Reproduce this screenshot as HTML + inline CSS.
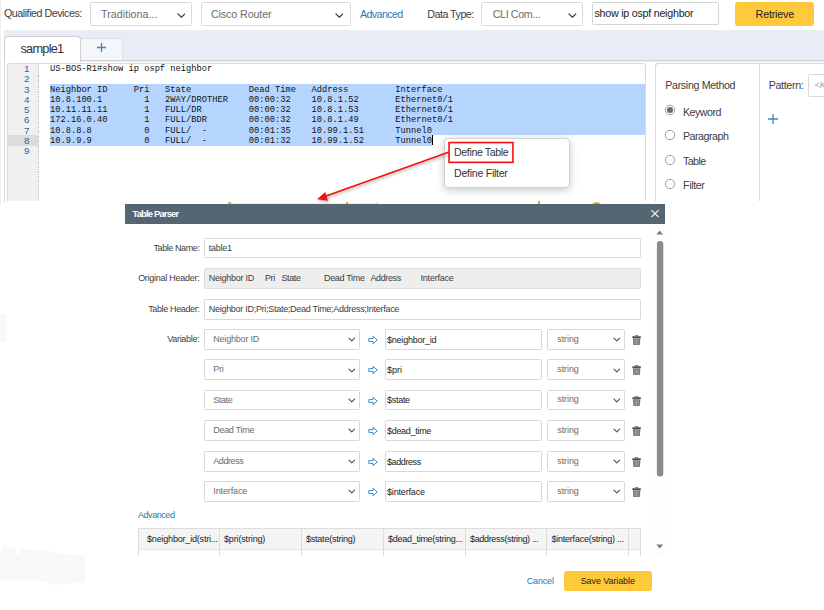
<!DOCTYPE html>
<html><head><meta charset="utf-8"><title>Table Parser</title>
<style>
html,body{margin:0;padding:0;}
body{width:824px;height:610px;overflow:hidden;background:#fff;position:relative;font-family:"Liberation Sans",sans-serif;color:#404040;}
.abs{position:absolute;}
.t{position:absolute;white-space:pre;transform:translateY(-50%);line-height:1;}
.f11{font-size:10.7px;}
.f9{font-size:9px;}
.gray{color:#6c6c6c;}
.blue{color:#2a7ab2;}
.box{position:absolute;box-sizing:border-box;border:1px solid #d9d9d9;background:#fff;border-radius:1.5px;}
.mono{font-family:"Liberation Mono",monospace;font-size:8.72px;line-height:10.25px;white-space:pre;color:#111;}
</style></head><body>

<div class="abs" style="left:0;top:0;width:1px;height:205px;background:#f0f0f0"></div>
<div class="abs" style="left:0;top:314px;width:6px;height:28px;background:#f8f8f8"></div>
<svg class="abs" style="left:0;top:540px" width="90" height="50" viewBox="0 540 90 50"><polygon points="0,553.3 1.6,553.3 1.6,547.4 15,547.4 15,553.7 20,553.7 20,549.2 45.7,549.7 55.2,553.7 84.9,555.2 84.9,582.8 67,582.8 67,584.4 52,584.4 42.6,580.8 0,580.8" fill="#f8f8f8"/></svg>
<span id="t1" class="t f11" style="left:4px;top:13.2px;letter-spacing:-0.465px;">Qualified Devices:</span>
<div class="box" style="left:90px;top:2px;width:101.5px;height:23.5px"></div>
<span id="t2" class="t f11 gray" style="left:101px;top:14.2px;letter-spacing:0.036px;">Traditiona...</span>
<svg class="abs" style="left:176.6px;top:12.8px" width="8.8" height="5.3" viewBox="-1 -1 8.8 5.3"><path d="M0 0 L3.4 3.3 L6.8 0" fill="none" stroke="#4a4a4a" stroke-width="1.2" stroke-linecap="round" stroke-linejoin="round"/></svg>
<div class="box" style="left:201px;top:2px;width:149.5px;height:23.5px"></div>
<span id="t3" class="t f11 gray" style="left:211px;top:14.2px;letter-spacing:-0.111px;">Cisco Router</span>
<svg class="abs" style="left:334.6px;top:12.8px" width="8.8" height="5.3" viewBox="-1 -1 8.8 5.3"><path d="M0 0 L3.4 3.3 L6.8 0" fill="none" stroke="#4a4a4a" stroke-width="1.2" stroke-linecap="round" stroke-linejoin="round"/></svg>
<span id="t4" class="t f11 blue" style="left:360px;top:13.7px;letter-spacing:-0.606px;">Advanced</span>
<span id="t5" class="t f11" style="left:427.25px;top:13.7px;letter-spacing:-0.5px;">Data Type:</span>
<div class="box" style="left:481px;top:2px;width:101.5px;height:23.5px"></div>
<span id="t6" class="t f11 gray" style="left:492.75px;top:14.2px;letter-spacing:-0.377px;">CLI Com...</span>
<svg class="abs" style="left:567.9px;top:12.8px" width="8.8" height="5.3" viewBox="-1 -1 8.8 5.3"><path d="M0 0 L3.4 3.3 L6.8 0" fill="none" stroke="#4a4a4a" stroke-width="1.2" stroke-linecap="round" stroke-linejoin="round"/></svg>
<div class="box" style="left:592px;top:2px;width:127px;height:22.5px;border-color:#d4d4d4"></div>
<span id="t7" class="t f11" style="left:594.5px;top:12.6px;letter-spacing:-0.243px;color:#222">show ip ospf neighbor</span>
<div class="abs" style="left:735px;top:2px;width:78.5px;height:23.6px;background:#ffc93c;border-radius:3px"></div>
<span id="t8" class="t f11" style="left:755.6px;top:13.8px;letter-spacing:-0.186px;color:#222">Retrieve</span>
<div class="abs" style="left:4px;top:30px;width:820px;height:30px;background:#e8ecf4"></div>
<div class="abs" style="left:4px;top:60px;width:820px;height:2px;background:linear-gradient(to bottom,#d2d4d8 0,#d2d4d8 50%,#e9eaec 50%,#e9eaec 100%)"></div>
<div class="abs" style="left:80px;top:38.3px;width:42.5px;height:21.3px;background:#f4f6f9;border:1px solid #dde0e6;border-bottom:none;border-radius:3px 3px 0 0;box-sizing:border-box"></div>
<svg class="abs" style="left:96px;top:42px" width="11" height="11" viewBox="0 0 11 11"><path d="M5.5 1 V10 M1 5.5 H10" stroke="#3a8bc0" stroke-width="1.3" fill="none"/></svg>
<div class="abs" style="left:4.3px;top:36.3px;width:76.8px;height:25.5px;background:#fff;border:1px solid #cfcfcf;border-bottom:none;border-radius:4px 4px 0 0;box-sizing:border-box"></div>
<span id="t9" class="t " style="left:20.5px;top:48.6px;letter-spacing:-0.788px;font-size:12.8px;color:#333">sample1</span>
<div class="abs" style="left:4.3px;top:61px;width:1px;height:140.5px;background:#dedede"></div>
<div class="abs" style="left:7px;top:63px;width:639px;height:138.4px;border:1px solid #dbdbdb;border-bottom:none;border-radius:3px 3px 0 0;box-sizing:border-box;background:#fff"></div>
<div class="abs" style="left:8px;top:64px;width:30.3px;height:137.4px;background:#f0f0f0"></div>
<div class="abs" style="left:8px;top:135.35px;width:30px;height:10.25px;background:#dcdcdc"></div>
<div class="abs" style="left:38.3px;top:64px;width:1px;height:137.4px;background:repeating-linear-gradient(to bottom,#b4c3d1 0,#b4c3d1 1.5px,transparent 1.5px,transparent 2.5px)"></div>
<div class="abs" style="left:50px;top:84.1px;width:595px;height:51.25px;background:#b5d5ff"></div>
<div class="abs" style="left:50px;top:135.35px;width:382px;height:10.25px;background:#b5d5ff"></div>
<div class="abs" style="left:432px;top:134.85px;width:1px;height:10.25px;background:#000"></div>
<div class="abs mono" style="left:8px;top:64.2px;width:21.4px;text-align:right;color:#2f6799;font-family:'Liberation Sans',sans-serif;font-size:9.9px">1
2
3
4
5
6
7
8
9</div>
<div id="code" class="abs mono" style="left:50px;top:64.2px">US-BOS-R1#show ip ospf neighbor

Neighbor ID     Pri   State           Dead Time   Address         Interface
10.8.100.1        1   2WAY/DROTHER    00:00:32    10.8.1.52       Ethernet0/1
10.11.11.11       1   FULL/DR         00:00:32    10.8.1.53       Ethernet0/1
172.16.0.40       1   FULL/BDR        00:00:32    10.8.1.49       Ethernet0/1
10.8.8.8          0   FULL/  -        00:01:35    10.99.1.51      Tunnel0
10.9.9.9          0   FULL/  -        00:01:32    10.99.1.52      Tunnel0
</div>
<div class="abs" style="left:655px;top:63px;width:170px;height:138.4px;border:1px solid #d9d9d9;border-bottom:none;border-right:none;border-radius:3px 0 0 0;box-sizing:border-box;background:#fff"></div>
<div class="abs" style="left:759px;top:64px;width:1px;height:137.4px;background:#dedede"></div>
<span id="t10" class="t f11" style="left:665.3px;top:84.6px;letter-spacing:-0.353px;">Parsing Method</span>
<svg class="abs" style="left:664.3px;top:104.4px" width="12" height="12" viewBox="0 0 12 12"><circle cx="6" cy="6" r="4.7" fill="#fff" stroke="#909090" stroke-width="0.9"/><circle cx="6" cy="6" r="3" fill="#6a6a6a"/></svg>
<span id="r0" class="t f11" style="left:683px;top:111.5px;letter-spacing:-0.522px;">Keyword</span>
<svg class="abs" style="left:664.3px;top:129px" width="12" height="12" viewBox="0 0 12 12"><circle cx="6" cy="6" r="4.7" fill="#fff" stroke="#909090" stroke-width="0.9"/></svg>
<span id="r1" class="t f11" style="left:683px;top:136.1px;letter-spacing:-0.508px;">Paragraph</span>
<svg class="abs" style="left:664.3px;top:153.6px" width="12" height="12" viewBox="0 0 12 12"><circle cx="6" cy="6" r="4.7" fill="#fff" stroke="#909090" stroke-width="0.9"/></svg>
<span id="r2" class="t f11" style="left:683px;top:160.7px;letter-spacing:-0.592px;">Table</span>
<svg class="abs" style="left:664.3px;top:177.7px" width="12" height="12" viewBox="0 0 12 12"><circle cx="6" cy="6" r="4.7" fill="#fff" stroke="#909090" stroke-width="0.9"/></svg>
<span id="r3" class="t f11" style="left:683px;top:184.79999999999998px;letter-spacing:-0.373px;">Filter</span>
<span id="t11" class="t f11" style="left:768.7px;top:84.6px;letter-spacing:-0.338px;">Pattern:</span>
<div class="box" style="left:808px;top:74px;width:30px;height:22.6px"></div>
<span id="t12" class="t " style="left:814.5px;top:85.3px;font-size:9px;font-style:italic;color:#a5a5a5">&lt;K</span>
<svg class="abs" style="left:766.8px;top:112.8px" width="12" height="12" viewBox="0 0 12 12"><path d="M6 1 V11 M1 6 H11" stroke="#3a8bc0" stroke-width="1.3" fill="none"/></svg>
<div class="abs" style="left:443.6px;top:137.8px;width:126px;height:50.4px;background:#fff;border:1px solid #d2d2d2;border-radius:4px;box-sizing:border-box;box-shadow:0 2px 8px rgba(0,0,0,0.22)"></div>
<span id="m1" class="t " style="left:454px;top:152.1px;letter-spacing:-0.365px;font-size:10.6px;color:#333">Define Table</span>
<span id="m2" class="t " style="left:454px;top:172.8px;letter-spacing:-0.269px;font-size:10.6px;color:#333">Define Filter</span>
<svg class="abs" style="left:446px;top:140px" width="70" height="26" viewBox="446 140 70 26"><rect x="449.05" y="142.55" width="63.9" height="19.8" fill="none" stroke="#f80d0d" stroke-width="1.6"/></svg>
<svg class="abs" style="left:300px;top:140px" width="160" height="70" viewBox="300 140 160 70"><g filter="url(#sh)"><path d="M448.5 152.2 L324 196.7" stroke="#f80d0d" stroke-width="1.7" fill="none"/><path d="M317.1 199.2 L325.2 192 L327.9 200.7 Z" fill="#f80d0d"/></g><defs><filter id="sh" x="-10%" y="-10%" width="120%" height="130%"><feDropShadow dx="1.2" dy="1.6" stdDeviation="1.1" flood-color="#000" flood-opacity="0.3"/></filter></defs></svg>
<div class="abs" style="left:228px;top:202.6px;width:150px;height:1px;background:#ececec"></div>
<div class="abs" style="left:377px;top:201.5px;width:1px;height:2px;background:#c8c8c8"></div>
<div class="abs" style="left:227.5px;top:201.5px;width:1px;height:2px;background:#c8c8c8"></div>
<div class="abs" style="left:228.8px;top:202px;width:2.3px;height:2px;background:#f5a010"></div>
<div class="abs" style="left:345.6px;top:202px;width:2.3px;height:2px;background:#f5a010"></div>
<div class="abs" style="left:537.6px;top:201.4px;width:2.3px;height:3px;background:#f5a010"></div>
<div class="abs" style="left:590.8px;top:201.7px;width:11.2px;height:8px;background:#f5a010;border-radius:5.8px 5.8px 0 0"></div>
<div class="abs" style="left:125px;top:203.8px;width:539.5px;height:400px;background:#fff"></div>
<div class="abs" style="left:125px;top:203.8px;width:539.5px;height:20px;background:#536672"></div>
<span id="d0" class="t " style="left:132.5px;top:213.5px;letter-spacing:-0.812px;font-size:9.4px;font-weight:bold;color:#fff">Table Parser</span>
<svg class="abs" style="left:650px;top:209px" width="10" height="10" viewBox="0 0 10 10"><path d="M1.4 1.2 L8.6 8.2 M8.6 1.2 L1.4 8.2" stroke="#fff" stroke-width="1.1" fill="none"/></svg>
<span id="d1" class="t f9" style="right:624.5px;top:248px;letter-spacing:-0.408px;">Table Name:</span>
<div class="box" style="left:203.75px;top:238px;width:436.75px;height:19.75px"></div>
<span id="d2" class="t f9" style="left:208.75px;top:248px;letter-spacing:-0.278px;">table1</span>
<span id="d3" class="t f9" style="right:624.5px;top:278.1px;letter-spacing:-0.26px;">Original Header:</span>
<div class="box" style="left:203.75px;top:268.25px;width:436.75px;height:20.3px;background:#eeeeee;border-color:#dcdcdc"></div>
<span id="d4" class="t f9" style="left:208.75px;top:278.1px;letter-spacing:-0.241px;">Neighbor ID</span>
<span id="d4b" class="t f9" style="left:265px;top:278.1px;letter-spacing:-0.4px;">Pri</span>
<span id="d4c" class="t f9" style="left:281.5px;top:278.1px;letter-spacing:-0.392px;">State</span>
<span id="d4d" class="t f9" style="left:324px;top:278.1px;letter-spacing:-0.327px;">Dead Time</span>
<span id="d4e" class="t f9" style="left:370.5px;top:278.1px;letter-spacing:-0.389px;">Address</span>
<span id="d4f" class="t f9" style="left:420.5px;top:278.1px;letter-spacing:-0.21px;">Interface</span>
<span id="d5" class="t f9" style="right:624.5px;top:308.6px;letter-spacing:-0.364px;">Table Header:</span>
<div class="box" style="left:203.75px;top:299.25px;width:436.75px;height:20.3px"></div>
<span id="d6" class="t f9" style="left:208.75px;top:308.8px;letter-spacing:-0.281px;">Neighbor ID;Pri;State;Dead Time;Address;Interface</span>
<span id="d7" class="t f9" style="right:624.5px;top:339px;letter-spacing:-0.278px;">Variable:</span>
<div class="box" style="left:203.75px;top:329px;width:155.75px;height:21px"></div>
<span id="n0" class="t f9 gray" style="left:213.25px;top:338.8px;letter-spacing:-0.193px;">Neighbor ID</span>
<svg class="abs" style="left:347.8px;top:337.2px" width="7.6" height="5.0" viewBox="-1 -1 7.6 5.0"><path d="M0 0 L2.8 3.0 L5.6 0" fill="none" stroke="#505050" stroke-width="1.1" stroke-linecap="round" stroke-linejoin="round"/></svg>
<svg class="abs" style="left:367.5px;top:334.8px" width="10" height="10" viewBox="0 0 10 10"><path d="M0.8 3.6 H5 V1.2 L9.2 5 L5 8.8 V6.4 H0.8 Z" fill="#fff" stroke="#3a8bc8" stroke-width="1" stroke-linejoin="round"/></svg>
<div class="box" style="left:385px;top:329px;width:157px;height:21px"></div>
<span id="v0" class="t f9" style="left:387px;top:339.6px;letter-spacing:-0.221px;color:#222">$neighbor_id</span>
<div class="box" style="left:547px;top:329px;width:78.1px;height:21px"></div>
<span id="s0" class="t f9 gray" style="left:557.3px;top:338.6px;letter-spacing:-0.094px;">string</span>
<svg class="abs" style="left:612.9px;top:337.2px" width="7.6" height="5.0" viewBox="-1 -1 7.6 5.0"><path d="M0 0 L2.8 3.0 L5.6 0" fill="none" stroke="#505050" stroke-width="1.1" stroke-linecap="round" stroke-linejoin="round"/></svg>
<svg class="abs" style="left:631.6px;top:334.7px" width="9.2" height="10.4" viewBox="0 0 9 10"><path d="M3.1 1.3 V0.7 Q3.1 0.2 3.6 0.2 H5.4 Q5.9 0.2 5.9 0.7 V1.3" fill="none" stroke="#4a4a4a" stroke-width="0.8"/><rect x="0.2" y="1.2" width="8.6" height="1.7" rx="0.7" fill="#4f4f4f"/><path d="M0.8 3.1 H8.2 L7.7 9.2 Q7.65 9.8 7 9.8 H2 Q1.35 9.8 1.3 9.2 Z" fill="#777"/><path d="M3 4 V9 M4.5 4 V9 M6 4 V9" stroke="#b0b0b0" stroke-width="0.7"/></svg>
<div class="box" style="left:203.75px;top:359px;width:155.75px;height:21px"></div>
<span id="n1" class="t f9 gray" style="left:213.25px;top:369.3px;letter-spacing:-0.2px;">Pri</span>
<svg class="abs" style="left:347.8px;top:367.7px" width="7.6" height="5.0" viewBox="-1 -1 7.6 5.0"><path d="M0 0 L2.8 3.0 L5.6 0" fill="none" stroke="#505050" stroke-width="1.1" stroke-linecap="round" stroke-linejoin="round"/></svg>
<svg class="abs" style="left:367.5px;top:365.3px" width="10" height="10" viewBox="0 0 10 10"><path d="M0.8 3.6 H5 V1.2 L9.2 5 L5 8.8 V6.4 H0.8 Z" fill="#fff" stroke="#3a8bc8" stroke-width="1" stroke-linejoin="round"/></svg>
<div class="box" style="left:385px;top:359px;width:157px;height:21px"></div>
<span id="v1" class="t f9" style="left:387px;top:370.1px;letter-spacing:-0.004px;color:#222">$pri</span>
<div class="box" style="left:547px;top:359px;width:78.1px;height:21px"></div>
<span id="s1" class="t f9 gray" style="left:557.3px;top:369.1px;letter-spacing:-0.094px;">string</span>
<svg class="abs" style="left:612.9px;top:367.7px" width="7.6" height="5.0" viewBox="-1 -1 7.6 5.0"><path d="M0 0 L2.8 3.0 L5.6 0" fill="none" stroke="#505050" stroke-width="1.1" stroke-linecap="round" stroke-linejoin="round"/></svg>
<svg class="abs" style="left:631.6px;top:365.2px" width="9.2" height="10.4" viewBox="0 0 9 10"><path d="M3.1 1.3 V0.7 Q3.1 0.2 3.6 0.2 H5.4 Q5.9 0.2 5.9 0.7 V1.3" fill="none" stroke="#4a4a4a" stroke-width="0.8"/><rect x="0.2" y="1.2" width="8.6" height="1.7" rx="0.7" fill="#4f4f4f"/><path d="M0.8 3.1 H8.2 L7.7 9.2 Q7.65 9.8 7 9.8 H2 Q1.35 9.8 1.3 9.2 Z" fill="#777"/><path d="M3 4 V9 M4.5 4 V9 M6 4 V9" stroke="#b0b0b0" stroke-width="0.7"/></svg>
<div class="box" style="left:203.75px;top:390px;width:155.75px;height:20px"></div>
<span id="n2" class="t f9 gray" style="left:213.25px;top:399.6px;letter-spacing:-0.392px;">State</span>
<svg class="abs" style="left:347.8px;top:398.0px" width="7.6" height="5.0" viewBox="-1 -1 7.6 5.0"><path d="M0 0 L2.8 3.0 L5.6 0" fill="none" stroke="#505050" stroke-width="1.1" stroke-linecap="round" stroke-linejoin="round"/></svg>
<svg class="abs" style="left:367.5px;top:395.6px" width="10" height="10" viewBox="0 0 10 10"><path d="M0.8 3.6 H5 V1.2 L9.2 5 L5 8.8 V6.4 H0.8 Z" fill="#fff" stroke="#3a8bc8" stroke-width="1" stroke-linejoin="round"/></svg>
<div class="box" style="left:385px;top:390px;width:157px;height:20px"></div>
<span id="v2" class="t f9" style="left:387px;top:400.40000000000003px;letter-spacing:-0.278px;color:#222">$state</span>
<div class="box" style="left:547px;top:390px;width:78.1px;height:20px"></div>
<span id="s2" class="t f9 gray" style="left:557.3px;top:399.40000000000003px;letter-spacing:-0.094px;">string</span>
<svg class="abs" style="left:612.9px;top:398.0px" width="7.6" height="5.0" viewBox="-1 -1 7.6 5.0"><path d="M0 0 L2.8 3.0 L5.6 0" fill="none" stroke="#505050" stroke-width="1.1" stroke-linecap="round" stroke-linejoin="round"/></svg>
<svg class="abs" style="left:631.6px;top:395.5px" width="9.2" height="10.4" viewBox="0 0 9 10"><path d="M3.1 1.3 V0.7 Q3.1 0.2 3.6 0.2 H5.4 Q5.9 0.2 5.9 0.7 V1.3" fill="none" stroke="#4a4a4a" stroke-width="0.8"/><rect x="0.2" y="1.2" width="8.6" height="1.7" rx="0.7" fill="#4f4f4f"/><path d="M0.8 3.1 H8.2 L7.7 9.2 Q7.65 9.8 7 9.8 H2 Q1.35 9.8 1.3 9.2 Z" fill="#777"/><path d="M3 4 V9 M4.5 4 V9 M6 4 V9" stroke="#b0b0b0" stroke-width="0.7"/></svg>
<div class="box" style="left:203.75px;top:420px;width:155.75px;height:21px"></div>
<span id="n3" class="t f9 gray" style="left:213.25px;top:430.0px;letter-spacing:-0.298px;">Dead Time</span>
<svg class="abs" style="left:347.8px;top:428.4px" width="7.6" height="5.0" viewBox="-1 -1 7.6 5.0"><path d="M0 0 L2.8 3.0 L5.6 0" fill="none" stroke="#505050" stroke-width="1.1" stroke-linecap="round" stroke-linejoin="round"/></svg>
<svg class="abs" style="left:367.5px;top:426.0px" width="10" height="10" viewBox="0 0 10 10"><path d="M0.8 3.6 H5 V1.2 L9.2 5 L5 8.8 V6.4 H0.8 Z" fill="#fff" stroke="#3a8bc8" stroke-width="1" stroke-linejoin="round"/></svg>
<div class="box" style="left:385px;top:420px;width:157px;height:21px"></div>
<span id="v3" class="t f9" style="left:387px;top:430.8px;letter-spacing:-0.3px;color:#222">$dead_time</span>
<div class="box" style="left:547px;top:420px;width:78.1px;height:21px"></div>
<span id="s3" class="t f9 gray" style="left:557.3px;top:429.8px;letter-spacing:-0.094px;">string</span>
<svg class="abs" style="left:612.9px;top:428.4px" width="7.6" height="5.0" viewBox="-1 -1 7.6 5.0"><path d="M0 0 L2.8 3.0 L5.6 0" fill="none" stroke="#505050" stroke-width="1.1" stroke-linecap="round" stroke-linejoin="round"/></svg>
<svg class="abs" style="left:631.6px;top:425.9px" width="9.2" height="10.4" viewBox="0 0 9 10"><path d="M3.1 1.3 V0.7 Q3.1 0.2 3.6 0.2 H5.4 Q5.9 0.2 5.9 0.7 V1.3" fill="none" stroke="#4a4a4a" stroke-width="0.8"/><rect x="0.2" y="1.2" width="8.6" height="1.7" rx="0.7" fill="#4f4f4f"/><path d="M0.8 3.1 H8.2 L7.7 9.2 Q7.65 9.8 7 9.8 H2 Q1.35 9.8 1.3 9.2 Z" fill="#777"/><path d="M3 4 V9 M4.5 4 V9 M6 4 V9" stroke="#b0b0b0" stroke-width="0.7"/></svg>
<div class="box" style="left:203.75px;top:451px;width:155.75px;height:21px"></div>
<span id="n4" class="t f9 gray" style="left:213.25px;top:460.8px;letter-spacing:-0.428px;">Address</span>
<svg class="abs" style="left:347.8px;top:459.2px" width="7.6" height="5.0" viewBox="-1 -1 7.6 5.0"><path d="M0 0 L2.8 3.0 L5.6 0" fill="none" stroke="#505050" stroke-width="1.1" stroke-linecap="round" stroke-linejoin="round"/></svg>
<svg class="abs" style="left:367.5px;top:456.8px" width="10" height="10" viewBox="0 0 10 10"><path d="M0.8 3.6 H5 V1.2 L9.2 5 L5 8.8 V6.4 H0.8 Z" fill="#fff" stroke="#3a8bc8" stroke-width="1" stroke-linejoin="round"/></svg>
<div class="box" style="left:385px;top:451px;width:157px;height:21px"></div>
<span id="v4" class="t f9" style="left:387px;top:461.6px;letter-spacing:-0.404px;color:#222">$address</span>
<div class="box" style="left:547px;top:451px;width:78.1px;height:21px"></div>
<span id="s4" class="t f9 gray" style="left:557.3px;top:460.6px;letter-spacing:-0.094px;">string</span>
<svg class="abs" style="left:612.9px;top:459.2px" width="7.6" height="5.0" viewBox="-1 -1 7.6 5.0"><path d="M0 0 L2.8 3.0 L5.6 0" fill="none" stroke="#505050" stroke-width="1.1" stroke-linecap="round" stroke-linejoin="round"/></svg>
<svg class="abs" style="left:631.6px;top:456.7px" width="9.2" height="10.4" viewBox="0 0 9 10"><path d="M3.1 1.3 V0.7 Q3.1 0.2 3.6 0.2 H5.4 Q5.9 0.2 5.9 0.7 V1.3" fill="none" stroke="#4a4a4a" stroke-width="0.8"/><rect x="0.2" y="1.2" width="8.6" height="1.7" rx="0.7" fill="#4f4f4f"/><path d="M0.8 3.1 H8.2 L7.7 9.2 Q7.65 9.8 7 9.8 H2 Q1.35 9.8 1.3 9.2 Z" fill="#777"/><path d="M3 4 V9 M4.5 4 V9 M6 4 V9" stroke="#b0b0b0" stroke-width="0.7"/></svg>
<div class="box" style="left:203.75px;top:481px;width:155.75px;height:21px"></div>
<span id="n5" class="t f9 gray" style="left:213.25px;top:491.0px;letter-spacing:-0.121px;">Interface</span>
<svg class="abs" style="left:347.8px;top:489.4px" width="7.6" height="5.0" viewBox="-1 -1 7.6 5.0"><path d="M0 0 L2.8 3.0 L5.6 0" fill="none" stroke="#505050" stroke-width="1.1" stroke-linecap="round" stroke-linejoin="round"/></svg>
<svg class="abs" style="left:367.5px;top:487.0px" width="10" height="10" viewBox="0 0 10 10"><path d="M0.8 3.6 H5 V1.2 L9.2 5 L5 8.8 V6.4 H0.8 Z" fill="#fff" stroke="#3a8bc8" stroke-width="1" stroke-linejoin="round"/></svg>
<div class="box" style="left:385px;top:481px;width:157px;height:21px"></div>
<span id="v5" class="t f9" style="left:387px;top:491.8px;letter-spacing:-0.172px;color:#222">$interface</span>
<div class="box" style="left:547px;top:481px;width:78.1px;height:21px"></div>
<span id="s5" class="t f9 gray" style="left:557.3px;top:490.8px;letter-spacing:-0.094px;">string</span>
<svg class="abs" style="left:612.9px;top:489.4px" width="7.6" height="5.0" viewBox="-1 -1 7.6 5.0"><path d="M0 0 L2.8 3.0 L5.6 0" fill="none" stroke="#505050" stroke-width="1.1" stroke-linecap="round" stroke-linejoin="round"/></svg>
<svg class="abs" style="left:631.6px;top:486.9px" width="9.2" height="10.4" viewBox="0 0 9 10"><path d="M3.1 1.3 V0.7 Q3.1 0.2 3.6 0.2 H5.4 Q5.9 0.2 5.9 0.7 V1.3" fill="none" stroke="#4a4a4a" stroke-width="0.8"/><rect x="0.2" y="1.2" width="8.6" height="1.7" rx="0.7" fill="#4f4f4f"/><path d="M0.8 3.1 H8.2 L7.7 9.2 Q7.65 9.8 7 9.8 H2 Q1.35 9.8 1.3 9.2 Z" fill="#777"/><path d="M3 4 V9 M4.5 4 V9 M6 4 V9" stroke="#b0b0b0" stroke-width="0.7"/></svg>
<span id="d8" class="t f9 blue" style="left:138px;top:515.4px;letter-spacing:-0.444px;">Advanced</span>
<div class="abs" style="left:138px;top:528px;width:502.5px;height:27.5px;box-sizing:border-box;border:1px solid #dcdcdc;border-bottom:none;background:#fff"></div>
<div class="abs" style="left:139px;top:529px;width:500.5px;height:19.5px;background:#f4f4f4;border-bottom:1px solid #e6e6e6"></div>
<div class="abs" style="left:219.25px;top:529px;width:1px;height:26.5px;background:#dcdcdc"></div>
<div class="abs" style="left:301.25px;top:529px;width:1px;height:26.5px;background:#dcdcdc"></div>
<div class="abs" style="left:383.25px;top:529px;width:1px;height:26.5px;background:#dcdcdc"></div>
<div class="abs" style="left:465.25px;top:529px;width:1px;height:26.5px;background:#dcdcdc"></div>
<div class="abs" style="left:546.4px;top:529px;width:1px;height:26.5px;background:#dcdcdc"></div>
<div class="abs" style="left:627.8px;top:529px;width:1px;height:26.5px;background:#dcdcdc"></div>
<span id="c0" class="t f9" style="left:147px;top:538.8px;letter-spacing:-0.187px;color:#222">$neighbor_id(stri...</span>
<span id="c1" class="t f9" style="left:224px;top:538.8px;letter-spacing:-0.149px;color:#222">$pri(string)</span>
<span id="c2" class="t f9" style="left:306px;top:538.8px;letter-spacing:-0.225px;color:#222">$state(string)</span>
<span id="c3" class="t f9" style="left:388px;top:538.8px;letter-spacing:-0.269px;color:#222">$dead_time(string...</span>
<span id="c4" class="t f9" style="left:470px;top:538.8px;letter-spacing:-0.33px;color:#222">$address(string) ...</span>
<span id="c5" class="t f9" style="left:551.5px;top:538.8px;letter-spacing:-0.234px;color:#222">$interface(string) ...</span>
<div class="abs" style="left:654px;top:224px;width:11px;height:332px;background:#fdfdfd"></div>
<svg class="abs" style="left:655px;top:240px" width="10" height="238" viewBox="655 240 10 238"><rect x="656.9" y="241" width="6.4" height="235.5" rx="3.2" fill="#8a8a8a"/></svg>
<svg class="abs" style="left:655.9px;top:230.2px" width="8" height="5" viewBox="0 0 8 5"><path d="M0.4 4.5 L3.7 0.6 L7.1 4.5 Z" fill="#7a7a7a"/></svg>
<svg class="abs" style="left:656.2px;top:544.1px" width="8" height="5" viewBox="0 0 8 5"><path d="M0.4 0.5 L3.7 4.4 L7.1 0.5 Z" fill="#7a7a7a"/></svg>
<span id="f1" class="t f9 blue" style="left:526.75px;top:581px;letter-spacing:-0.166px;">Cancel</span>
<div class="abs" style="left:564.25px;top:570.75px;width:87.9px;height:20.5px;background:#ffc93c;border-radius:2.5px"></div>
<span id="f2" class="t f9" style="left:580.7px;top:581.2px;letter-spacing:-0.094px;color:#222">Save Variable</span>
</body></html>
